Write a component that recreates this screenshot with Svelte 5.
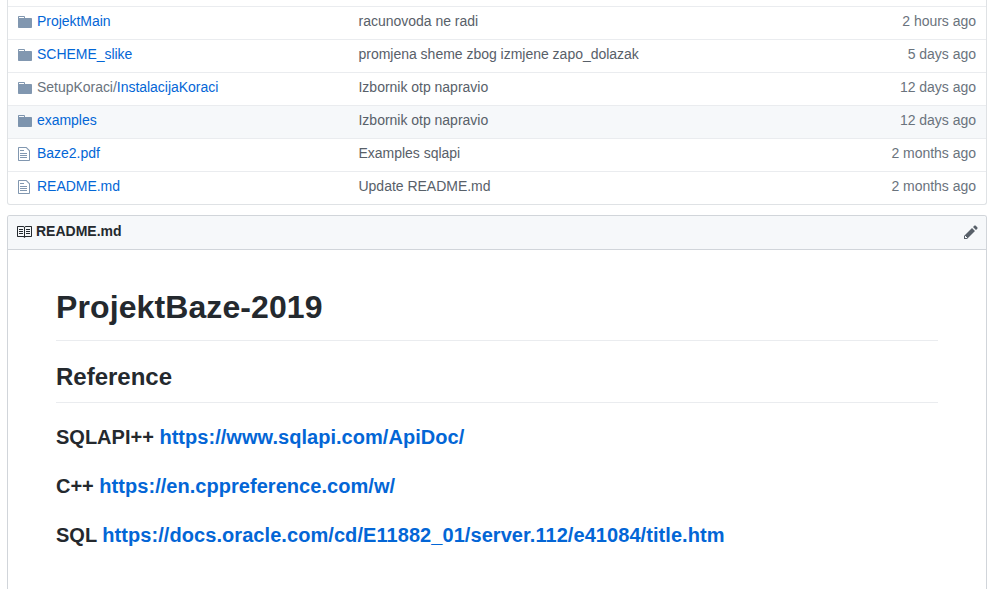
<script>
  const folder = 'M13 4H7V3c0-.66-.31-1-1-1H1c-.55 0-1 .45-1 1v10c0 .55.45 1 1 1h12c.55 0 1-.45 1-1V5c0-.55-.45-1-1-1zM6 4H1V3h5v1z';
  const file = 'M6 5H2V4h4v1zM2 8h7V7H2v1zm0 2h7V9H2v1zm0 2h7v-1H2v1zm10-7.5V14c0 .55-.45 1-1 1H1c-.55 0-1-.45-1-1V2c0-.55.45-1 1-1h7.5L12 4.5zM11 5L8 2H1v12h10V5z';

  const rows = [
    { dir: true, name: 'ProjektMain', message: 'racunovoda ne radi', age: '2 hours ago' },
    { dir: true, name: 'SCHEME_slike', message: 'promjena sheme zbog izmjene zapo_dolazak', age: '5 days ago' },
    { dir: true, prefix: 'SetupKoraci/', name: 'InstalacijaKoraci', message: 'Izbornik otp napravio', age: '12 days ago' },
    { dir: true, name: 'examples', message: 'Izbornik otp napravio', age: '12 days ago', active: true },
    { dir: false, name: 'Baze2.pdf', message: 'Examples sqlapi', age: '2 months ago' },
    { dir: false, name: 'README.md', message: 'Update README.md', age: '2 months ago' }
  ];

  const links = [
    { label: 'SQLAPI++', url: 'https://www.sqlapi.com/ApiDoc/' },
    { label: 'C++', url: 'https://en.cppreference.com/w/' },
    { label: 'SQL', url: 'https://docs.oracle.com/cd/E11882_01/server.112/e41084/title.htm' }
  ];
</script>

<main>
  <div class="files">
    {#each rows as row}
      <div class="row" class:active={row.active}>
        <svg class="type" width={row.dir ? 14 : 12} height="16" viewBox="0 0 {row.dir ? 14 : 12} 16">
          <path fill-rule="evenodd" d={row.dir ? folder : file} />
        </svg>
        <div class="name">
          <a href="#top">{#if row.prefix}<span class="prefix">{row.prefix}</span>{/if}{row.name}</a>
        </div>
        <div class="message">{row.message}</div>
        <div class="age">{row.age}</div>
      </div>
    {/each}
  </div>

  <section class="readme">
    <header>
      <svg class="book" width="16" height="16" viewBox="0 0 16 16">
        <path fill-rule="evenodd" d="M3 5h4v1H3V5zm0 3h4V7H3v1zm0 2h4V9H3v1zm11-5h-4v1h4V5zm0 2h-4v1h4V7zm0 2h-4v1h4V9zm2-6v9c0 .55-.45 1-1 1H9.5l-1 1-1-1H2c-.55 0-1-.45-1-1V3c0-.55.45-1 1-1h5.5l1 1 1-1H15c.55 0 1 .45 1 1zm-8 .5L7.5 3H2v9h6V3.5zm7-.5H9.5l-.5.5V12h6V3z" />
      </svg>
      <strong>README.md</strong>
      <svg class="pencil" width="14" height="16" viewBox="0 0 14 16">
        <path fill-rule="evenodd" d="M0 12v3h3l8-8-3-3-8 8zm3 2H1v-2h1v1h1v1zm10.3-9.3L12 6 9 3l1.3-1.3a.996.996 0 0 1 1.41 0l1.59 1.59c.39.39.39 1.02 0 1.41z" />
      </svg>
    </header>
    <article>
      <h1>ProjektBaze-2019</h1>
      <h2>Reference</h2>
      {#each links as link}
        <h3>{link.label} <a href="#top">{link.url}</a></h3>
      {/each}
    </article>
  </section>
</main>

<style>
  :global(body) {
    margin: 0;
    background: #fff;
  }

  main {
    box-sizing: border-box;
    height: 589px;
    padding: 0 1px 0 7px;
    overflow: hidden;
    display: flex;
    flex-direction: column;
    font: 14px/20px 'Liberation Sans', Arial, Helvetica, sans-serif;
    color: #24292e;
  }

  a {
    color: #0366d6;
    text-decoration: none;
  }

  .files {
    flex: none;
    padding-top: 6px;
    margin-bottom: 10px;
    border: 1px solid #dfe2e5;
    border-top: 0;
    border-radius: 0 0 3px 3px;
  }

  .row {
    box-sizing: border-box;
    display: flex;
    height: 33px;
    padding: 4px 10px 0;
    border-top: 1px solid #eaecef;
    color: #586069;
    white-space: nowrap;
  }

  .row:last-child {
    border-radius: 0 0 3px 3px;
  }

  .active {
    background: #f6f8fa;
  }

  svg {
    flex: none;
    display: block;
  }

  .type {
    margin-top: 3px;
    fill: rgba(3, 47, 98, 0.5);
  }

  .name {
    width: 321.5px;
    margin-left: 5px;
    letter-spacing: -0.03px;
  }

  .type[width='12'] + .name {
    margin-left: 7px;
  }

  .prefix {
    color: #6a737d;
  }

  .message {
    flex: 1;
    letter-spacing: -0.015px;
  }

  .age {
    color: #6a737d;
    letter-spacing: -0.02px;
  }

  .readme {
    flex: 1;
    display: flex;
    flex-direction: column;
    border: 1px solid #d1d5da;
    border-bottom: 0;
    border-radius: 3px 3px 0 0;
  }

  header {
    box-sizing: border-box;
    flex: none;
    display: flex;
    height: 34px;
    padding: 5px 8px 0;
    background: #f6f8fa;
    border-bottom: 1px solid #d1d5da;
    border-radius: 2px 2px 0 0;
  }

  .book {
    margin-top: 3px;
    fill: #24292e;
  }

  header strong {
    flex: 1;
    margin-left: 4px;
    font-weight: 700;
  }

  .pencil {
    margin-top: 3px;
    fill: #586069;
  }

  article {
    padding: 37px 48px 0;
  }

  h1,
  h2,
  h3 {
    margin: 0;
    font-weight: 700;
    white-space: nowrap;
  }

  h1 {
    padding-bottom: 13px;
    border-bottom: 1px solid #eaecef;
    font-size: 32px;
    line-height: 40px;
    letter-spacing: 0.1px;
  }

  h2 {
    margin: 21px 0 22px;
    padding-bottom: 10px;
    border-bottom: 1px solid #eaecef;
    font-size: 24px;
    line-height: 30px;
  }

  h3 {
    margin-bottom: 24px;
    font-size: 20px;
    line-height: 25px;
  }

  h3 a {
    letter-spacing: 0.04px;
  }

  h3:last-child a {
    letter-spacing: 0.065px;
  }
</style>
